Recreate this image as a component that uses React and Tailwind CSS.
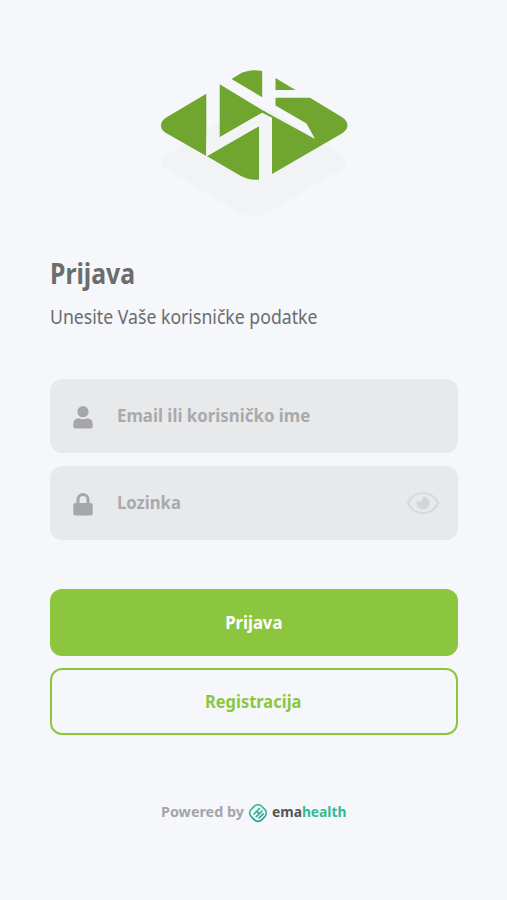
import React from "react";

function Logo() {
  return (
    <svg width="187" height="150" viewBox="161 69 187 150" className="block">
      <path d="M166 155 L240 109 Q254 102 268 109 L342 155 Q351 162 342 169 L268 213 Q254 220 240 213 L166 169 Q157 162 166 155Z" fill="#f2f3f4" />
      <path d="M206.3 93.7 L167 117 Q161 120.500 161 125.500 Q161 130 166 133 L206.300 156Z" fill="#70a62f" />
      <path d="M231.500 79 L240 73.800 Q250 68.500 262.200 71 L262.200 97.300Z" fill="#70a62f" />
      <path d="M275.500 78 L295.500 90 H275.500Z" fill="#70a62f" />
      <path d="M219.700 84.300 L265 111.700 L262 112.900 L219.700 137.300Z" fill="#70a62f" />
      <path d="M263 110.500 L315 139 L306.500 123.500 L275.500 105.500 V97.700 H310 L341 116.500 Q347.500 120.500 347.500 125.500 Q347.500 130 341 134 L272 174 V117.800 L262 112.800Z" fill="#70a62f" />
      <path d="M207 156.300 L259.200 126 V179.700 Q249 180.500 240 175.500Z" fill="#70a62f" />
      <path d="M206.300 156 V137 H219.700 V137.300 L262 112.900 L271.900 118 V174 L259.200 180 V126Z" fill="#f3f4f5" />
    </svg>
  );
}

function UserIcon() {
  return (
    <svg width="20" height="23" viewBox="0 0 20 23" fill="#a5a6a8">
      <circle cx="10" cy="5.700" r="5.600" />
      <path d="M0.300 20.500 V18.500 Q0.300 12.300 6 12.300 Q10 14 14 12.300 Q19.700 12.300 19.700 18.500 V20.500 Q19.700 22.500 17.700 22.500 H2.300 Q0.300 22.500 0.300 20.500Z" />
    </svg>
  );
}

function LockIcon() {
  return (
    <svg width="20" height="23" viewBox="0 0 20 23">
      <path d="M5 11 V6.500 A5 5 0 0 1 15 6.500 V11" fill="none" stroke="#a5a6a8" strokeWidth="3" />
      <rect x="0.300" y="10" width="19.400" height="12.500" rx="2" fill="#a5a6a8" />
    </svg>
  );
}

function EyeIcon() {
  return (
    <svg width="34" height="24" viewBox="0 0 34 24">
      <path d="M1.800 12 C5 5.500 10 2 17 2 S29 5.500 32.200 12 C29 18.500 24 22 17 22 S5 18.500 1.800 12Z" fill="none" stroke="#d8d9db" strokeWidth="2.200" strokeLinejoin="round" />
      <path d="M17 5.500 A6.500 6.500 0 1 1 10.500 11 L14.500 10.500 Q17 9.500 17 5.500Z" fill="#d4d5d7" />
    </svg>
  );
}

function EmaMark() {
  return (
    <svg width="20" height="20" viewBox="0 0 20 20" fill="none" strokeLinecap="round" strokeLinejoin="round">
      <defs>
        <linearGradient id="ema" gradientUnits="userSpaceOnUse" x1="3" y1="3" x2="17" y2="17">
          <stop offset="0" stopColor="#43c59a" />
          <stop offset="1" stopColor="#259c93" />
        </linearGradient>
      </defs>
      <rect x="2.700" y="2.700" width="14.600" height="14.600" rx="5" transform="rotate(45 10 10)" stroke="url(#ema)" strokeWidth="1.800" />
      <path d="M6 11 L11.500 5.500 M8.300 13.700 L14 8 M11 15 L15.200 10.800 M8.800 8.300 L11.200 10.700" stroke="url(#ema)" strokeWidth="1.700" />
    </svg>
  );
}

export default function App() {
  return (
    <main className="flex h-[900px] w-[507px] flex-col bg-[#f5f7fb] px-[50px] pt-[69px] font-['Noto_Sans',sans-serif] text-[#6b6c6e]">
      <div className="ml-[111px] h-[150px]"><Logo /></div>
      <h1 className="mt-[34px] h-10 text-[28px] leading-10 font-bold"><span className="inline-block origin-left scale-x-[.885]">Prijava</span></h1>
      <p className="mt-[9px] h-[30px] text-[19px] leading-[30px] whitespace-nowrap"><span className="inline-block origin-left scale-x-[.93]">Unesite Vaše korisničke podatke</span></p>
      <div className="mt-[46.500px] flex flex-col gap-[13px] text-[18.500px] font-bold text-[#a9aaac]">
        <div className="flex h-[74px] w-[408px] items-center rounded-xl bg-[#e8e9eb] pl-[23px]">
          <div className="mt-1 w-[44px]"><UserIcon /></div>
          <span className="mb-0.5 inline-block origin-left scale-x-[.91] whitespace-nowrap">Email ili korisničko ime</span>
        </div>
        <div className="flex h-[74px] w-[408px] items-center rounded-xl bg-[#e8e9eb] pr-[18px] pl-[23px]">
          <div className="mt-1 w-[44px]"><LockIcon /></div>
          <span className="mb-0.5 inline-block origin-left scale-x-[.9]">Lozinka</span>
          <div className="ml-auto"><EyeIcon /></div>
        </div>
      </div>
      <div className="mt-[49px] flex flex-col gap-3 text-[18.500px] font-bold">
        <button className="h-[67.500px] w-[408px] rounded-xl bg-[#8cc63f] text-white"><span className="inline-block scale-x-[.9]">Prijava</span></button>
        <button className="h-[67px] w-[408px] rounded-xl border-2 border-[#8cc63f] pr-[2px] pb-[2px] text-[#8cc63f]"><span className="inline-block scale-x-[.89]">Registracija</span></button>
      </div>
      <footer className="mt-[65.500px] flex h-6 items-center pl-[111px] text-[14.500px] font-bold whitespace-nowrap text-[#a3a5a9]">
        <div className="mb-0.5 w-[87px]"><span className="inline-block origin-left scale-x-[.99]">Powered by</span></div>
        <EmaMark />
        <div className="mb-0.5 ml-1"><span className="inline-block origin-left scale-x-[.95] text-[#505459]">ema<span className="text-[#36b795]">health</span></span></div>
      </footer>
    </main>
  );
}
